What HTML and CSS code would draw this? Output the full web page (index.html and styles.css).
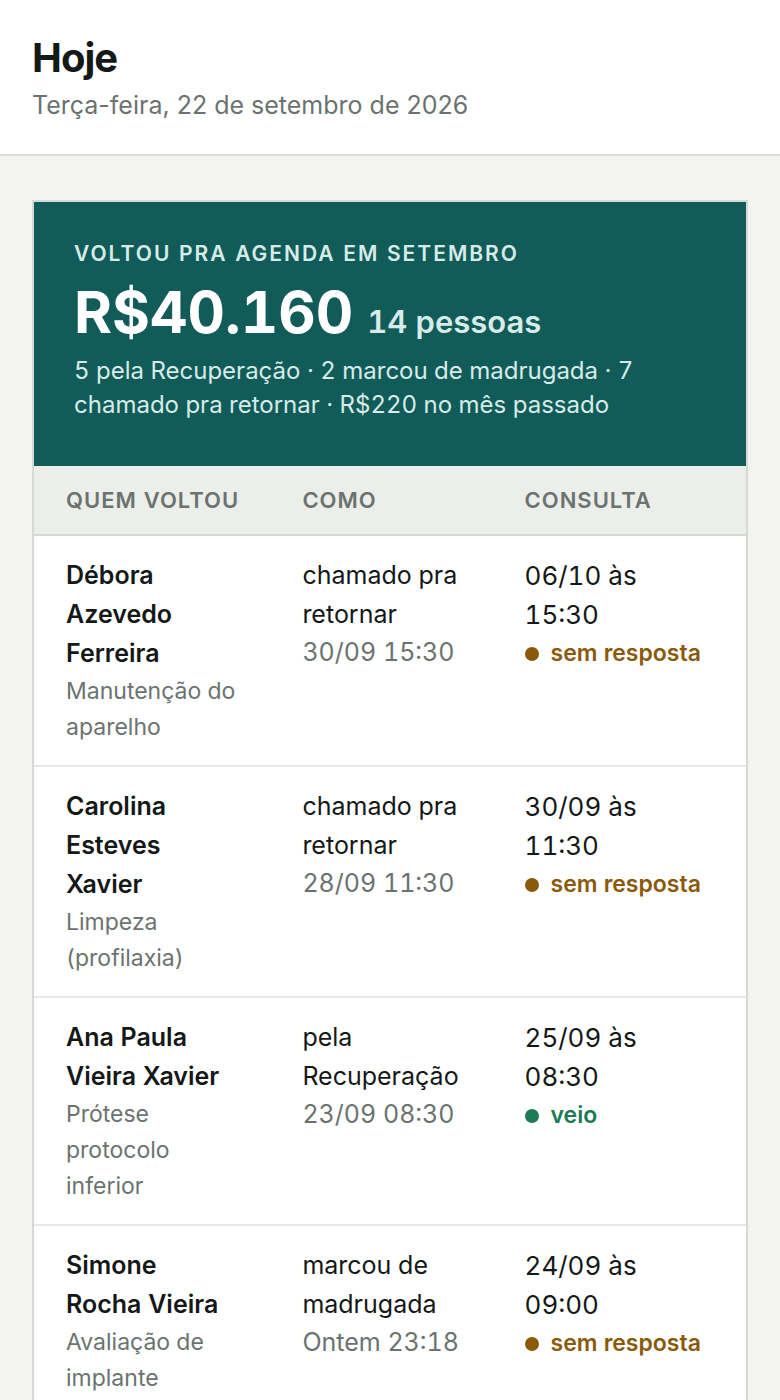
FILE: index.html
```html
<!DOCTYPE html>
<html lang="pt-BR">

<head>
  <meta charset="UTF-8" />
  <meta name="viewport" content="width=device-width, initial-scale=1" />
  <title>Hoje</title>
  <link rel="stylesheet" href="styles.css">
</head>

<body>
  <!-- Topo -->
  <header class="top">
    <h1>Hoje</h1>
    <p>Terça-feira, 22 de setembro de 2026</p>
  </header>

  <main class="wrap">
    <section class="card">
      <!-- Resumo do mês -->
      <div class="summary">
        <h2>Voltou pra agenda em setembro</h2>
        <p class="total"><strong>R$40.160</strong> <span>14 pessoas</span></p>
        <p class="detail">5 pela Recuperação · 2 marcou de madrugada · 7 chamado pra retornar · R$220 no mês passado</p>
      </div>

      <!-- Lista de quem voltou -->
      <table class="list">
        <thead>
          <tr>
            <th scope="col" class="who">Quem voltou</th>
            <th scope="col" class="how">Como</th>
            <th scope="col">Consulta</th>
          </tr>
        </thead>
        <tbody>
          <tr>
            <td>
              <strong>Débora Azevedo Ferreira</strong>
              <small>Manutenção do aparelho</small>
            </td>
            <td>
              chamado pra retornar
              <time>30/09 15:30</time>
            </td>
            <td class="when">
              06/10 às<br>15:30
              <span class="status wait">sem resposta</span>
            </td>
          </tr>
          <tr>
            <td>
              <strong>Carolina Esteves Xavier</strong>
              <small>Limpeza (profilaxia)</small>
            </td>
            <td>
              chamado pra retornar
              <time>28/09 11:30</time>
            </td>
            <td class="when">
              30/09 às<br>11:30
              <span class="status wait">sem resposta</span>
            </td>
          </tr>
          <tr>
            <td>
              <strong>Ana Paula Vieira Xavier</strong>
              <small>Prótese protocolo inferior</small>
            </td>
            <td>
              pela Recuperação
              <time>23/09 08:30</time>
            </td>
            <td class="when">
              25/09 às<br>08:30
              <span class="status done">veio</span>
            </td>
          </tr>
          <tr>
            <td>
              <strong>Simone<br>Rocha Vieira</strong>
              <small>Avaliação de implante</small>
            </td>
            <td>
              marcou de madrugada
              <time>Ontem 23:18</time>
            </td>
            <td class="when">
              24/09 às<br>09:00
              <span class="status wait">sem resposta</span>
            </td>
          </tr>
        </tbody>
      </table>
    </section>
  </main>
</body>

</html>
```
FILE: styles.css
```css
* {
  box-sizing: border-box;
}

body,
h1,
h2,
p {
  margin: 0;
}

body {
  background-color: #f3f4ef;
  color: #141817;
  font-family: Inter, "Liberation Sans", sans-serif;
  font-size: 25px;
  line-height: 39px;
  font-variant-numeric: tabular-nums;
}

/* Topo */
.top {
  padding: 32px 32px 29px;
  background-color: #fff;
  border-bottom: 2px solid #d9dcd8;
}

.top h1 {
  font-size: 40px;
  line-height: 52px;
  font-weight: 700;
  letter-spacing: -1px;
}

.top p {
  margin-top: 2px;
  color: #6b7370;
  font-variant-numeric: normal;
}

.wrap {
  padding: 44px 32px;
}

.card {
  background-color: #fff;
  border: 2px solid #d5dad7;
}

/* Resumo do mês */
.summary {
  padding: 34px 40px 44px;
  background-color: #115c59;
  color: #d8ebe8;
}

.summary h2 {
  font-size: 21px;
  line-height: 36px;
  font-weight: 600;
  letter-spacing: 2px;
  text-transform: uppercase;
}

.total {
  display: flex;
  flex-wrap: wrap;
  align-items: baseline;
  column-gap: 14px;
  margin-top: 4px;
}

.total strong {
  color: #fff;
  font-size: 58px;
  line-height: 72px;
  font-weight: 700;
}

.total span {
  font-size: 31px;
  line-height: 39px;
  font-weight: 600;
}

.detail {
  margin-top: 6px;
  font-size: 24px;
  line-height: 34px;
}

/* Lista */
.list {
  width: 100%;
  table-layout: fixed;
  border-collapse: separate;
  border-spacing: 0;
}

.list th,
.list td {
  padding: 20px 24px 20px 32px;
  text-align: left;
  vertical-align: top;
}

.list td:first-child {
  padding-right: 32px;
}

.list th {
  padding-top: 16px;
  padding-bottom: 16px;
  background-color: #eceeea;
  border-bottom: 2px solid #d5dad7;
  color: #6b7370;
  font-size: 22px;
  line-height: 36px;
  font-weight: 600;
  letter-spacing: 1px;
  text-transform: uppercase;
  white-space: nowrap;
}

.list .who {
  width: 33.2%;
}

.list .how {
  width: 31.2%;
}

.list td {
  border-bottom: 2px solid #e6e8e6;
}

.list .when {
  font-size: 26px;
}

.list strong {
  display: block;
  font-weight: 600;
}

.list small,
.list time {
  display: block;
  color: #6b7370;
  font-size: 23px;
  line-height: 36px;
}

.list time {
  font-size: 25px;
}

/* Situação da consulta */
.status {
  display: flex;
  align-items: center;
  gap: 12px;
  font-size: 23px;
  font-weight: 600;
  white-space: nowrap;
}

.status::before {
  content: "";
  flex: none;
  width: 14px;
  height: 14px;
  border-radius: 50%;
  background-color: currentColor;
}

.wait {
  color: #8a5a0a;
}

.done {
  color: #1c7a55;
}
```
